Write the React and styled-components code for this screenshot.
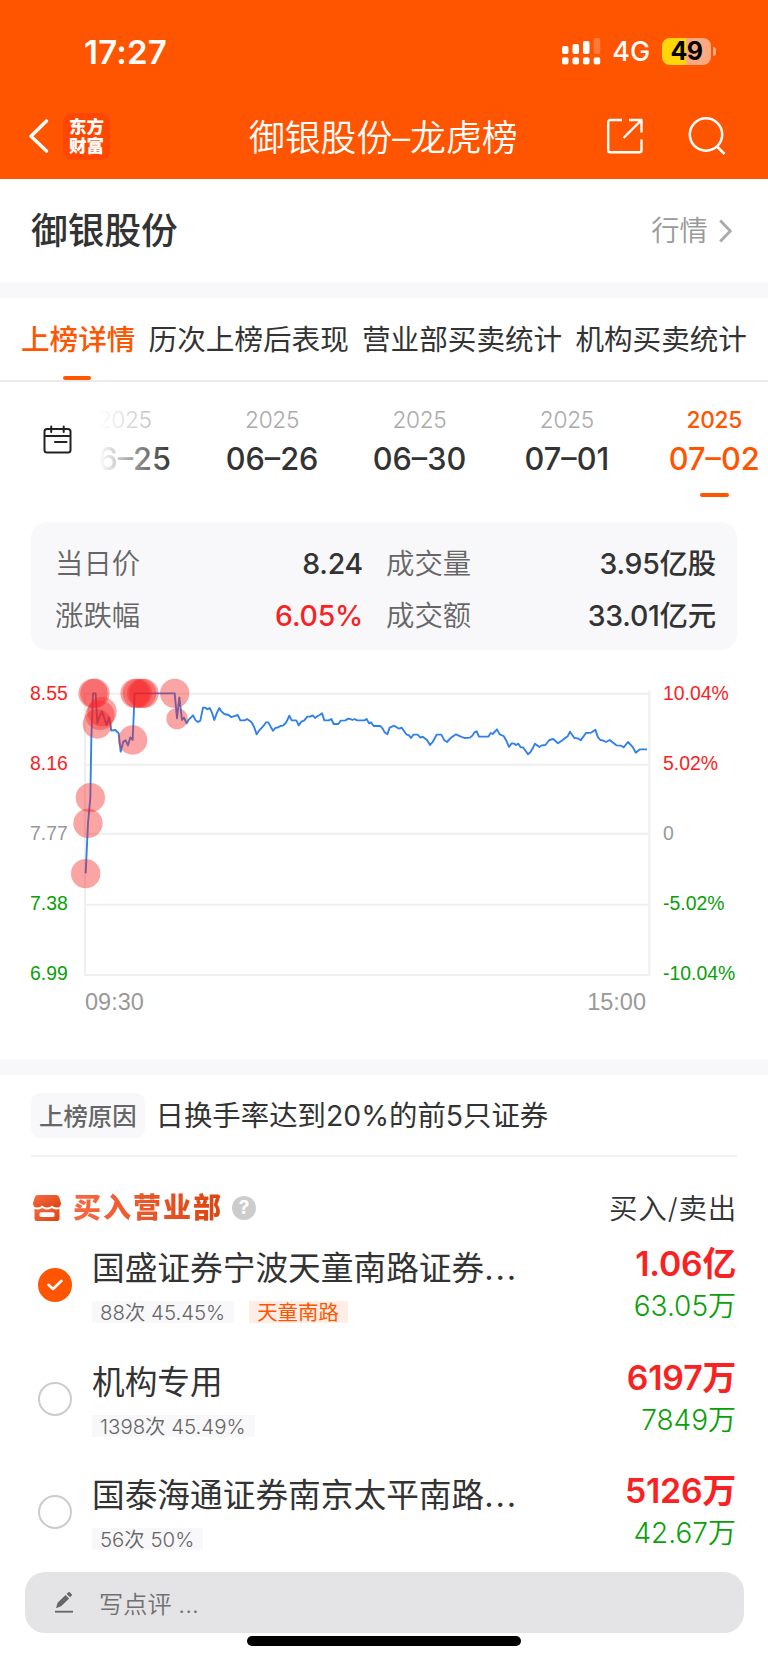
import React from 'react';
import styled, { createGlobalStyle, css } from 'styled-components';


const GlobalStyle = createGlobalStyle`
    * {
        box-sizing: border-box;
    }

    body {
        margin: 0;
        background: #fff;
        color: #333;
        font-family: Inter, "Noto Sans CJK SC", sans-serif;
        -webkit-font-smoothing: antialiased;
    }
`;

const Page = styled.div`
    width: 768px;
    height: 1663px;
    overflow: hidden;
    display: flex;
    flex-direction: column;
    background: #fff;
    white-space: nowrap;

    svg {
        display: block;
        flex: none;
    }
`;

const Header = styled.header`
    height: 179px;
    background: #ff5500;
    color: #fff;
`;

const StatusBar = styled.div`
    display: flex;
    align-items: center;
    height: 102px;
    padding: 0 52px 0 84px;
`;

const Clock = styled.span`
    flex: 1;
    padding-top: 1px;
    font-size: 33px;
    font-weight: 600;
    letter-spacing: 0.2px;
`;

const Network = styled.span`
    margin: 0 12px 0 11px;
    padding-top: 1px;
    font-size: 27px;
    font-weight: 450;
    letter-spacing: -0.1px;
`;

const Battery = styled.span`
    width: 49px;
    height: 27px;
    border-radius: 8px;
    background: linear-gradient(90deg, #ffd60a 49%, #ffa982 49%);
    color: #000;
    font-size: 25px;
    font-weight: 700;
    line-height: 27px;
    text-align: center;
    letter-spacing: -0.5px;
`;

const BatteryTip = styled.span`
    width: 3px;
    height: 9px;
    margin-left: 2px;
    border-radius: 0 4px 4px 0;
    background: #ffa982;
`;

const NavBar = styled.nav`
    display: flex;
    align-items: center;
    height: 68px;
    padding: 0 42px 0 28px;
`;

const AppLogo = styled.div`
    width: 47px;
    height: 47px;
    margin-left: 14px;
    padding-top: 4px;
    border-radius: 9px;
    background: #ff4700;
    font-size: 17.5px;
    font-weight: 900;
    line-height: 19.5px;
    text-align: center;
`;

const NavTitle = styled.h1`
    flex: 1;
    margin: 0;
    padding: 4px 0 0 139px;
    font-size: 35.8px;
    font-weight: 350;
    line-height: 48px;
`;

const NavActions = styled.div`
    display: flex;
    align-items: center;
    gap: 45px;
`;

const StockBar = styled.section`
    display: flex;
    align-items: center;
    justify-content: space-between;
    height: 103px;
    padding: 0 36px 0 31px;
`;

const StockName = styled.h2`
    margin: 0;
    font-size: 36.7px;
    font-weight: 500;
    line-height: 50px;
`;

const QuoteLink = styled.a`
    display: flex;
    align-items: center;
    gap: 11px;
    color: #999;
    font-size: 28.4px;
    font-weight: 350;
    line-height: 40px;
`;

const Divider = styled.div`
    flex: none;
    height: 16px;
    background: #f8f8fa;
`;

const Tabs = styled.div`
    display: flex;
    justify-content: space-between;
    height: 84px;
    padding: 20px 21px 0 21px;
    border-bottom: 2px solid #ebebeb;
`;

const Tab = styled.div`
    display: flex;
    flex-direction: column;
    align-items: center;
    justify-content: space-between;
    font-size: 28.6px;
    line-height: 44px;

    ${props => props.$active && css`
        color: #ff5500;
        font-weight: 500;

        &::after {
            content: "";
            width: 28px;
            height: 4px;
            margin-right: 2px;
            border-radius: 2px;
            background: #ff5500;
        }
    `}
`;

const DateBar = styled.div`
    display: flex;
    height: 140px;
`;

const CalendarButton = styled.div`
    width: 99px;
    padding: 43px 0 0 43px;
`;

const DateScroller = styled.div`
    position: relative;
    flex: 1;
    overflow: hidden;

    &::before {
        content: "";
        position: absolute;
        inset: 0 auto 0 0;
        width: 72px;
        background: linear-gradient(90deg, #fff, rgba(255, 255, 255, 0));
    }
`;

const DateList = styled.div`
    display: flex;
    margin-left: -48px;
`;

const DateItem = styled.div`
    flex: none;
    display: flex;
    flex-direction: column;
    align-items: center;
    width: 147.4px;
    padding-top: 24px;
    color: ${props => props.$active ? '#ff5500' : '#333'};

    &::after {
        content: "";
        width: 29px;
        height: 4px;
        margin-top: 13px;
        border-radius: 2px;
        background: ${props => props.$active ? '#ff5500' : 'transparent'};
    }
`;

const Year = styled.span`
    color: ${props => props.$active ? '#ff5500' : '#aaa'};
    font-size: 22.7px;
    font-weight: ${props => props.$active ? 450 : 350};
    line-height: 28px;
    letter-spacing: -0.3px;
`;

const Day = styled.span`
    margin-top: 4px;
    font-size: 30.7px;
    font-weight: 450;
    line-height: 42px;
    letter-spacing: 0;
`;

const Summary = styled.dl`
    display: grid;
    grid-template-columns: 308px 1fr;
    column-gap: 23px;
    align-content: start;
    height: 128px;
    margin: 0 31px;
    padding: 16px 21px 0 24px;
    border-radius: 16px;
    background: #f8f8fa;
`;

const SummaryItem = styled.div`
    display: flex;
    justify-content: space-between;
    height: 52px;
    font-size: 28.4px;
    line-height: 52px;
`;

const Label = styled.dt`
    color: #666;
    font-weight: 350;
`;

const Value = styled.dd`
    margin: 0;
    color: ${props => props.$up ? '#f92222' : '#333'};
    font-weight: 500;
    letter-spacing: -0.2px;
`;

const Chart = styled.section`
    display: flex;
    height: 409px;
    padding: 33px 0 0 30px;
    font-family: "Liberation Sans", Arial, sans-serif;
`;

const Axis = styled.div`
    display: flex;
    flex-direction: column;
    justify-content: space-between;
    width: ${props => props.$width}px;
    height: 300px;
    font-size: 19.4px;
    line-height: 20px;
`;

const tones = { up: '#f92222', flat: '#999', down: '#09a009' };

const Tick = styled.span`
    color: ${props => tones[props.$tone]};
`;

const Plot = styled.div`
    width: 566px;
    margin-right: 13px;
`;

const ChartBox = styled.div`
    height: 320px;
    margin-top: -23px;
`;

const TimeAxis = styled.div`
    display: flex;
    justify-content: space-between;
    margin-top: 8px;
    padding: 0 4px 0 1px;
    color: #999;
    font-size: 23.5px;
    line-height: 28px;
`;

const Reason = styled.section`
    display: flex;
    align-items: center;
    height: 82px;
    margin: 0 31px;
    border-bottom: 2px solid #f2f2f3;
`;

const ReasonText = styled.span`
    padding-bottom: 4px;
    font-size: 28.4px;
`;

const ReasonTag = styled.span`
    height: 45px;
    margin-right: 11px;
    padding: 0 8px;
    border-radius: 9px;
    background: #f8f8fa;
    color: #666;
    font-size: 24.4px;
    font-weight: 500;
    line-height: 46px;
`;

const BuyHeader = styled.div`
    display: flex;
    align-items: center;
    height: 71px;
    padding: 31px 31px 0 33px;
`;

const BuyTitle = styled.h3`
    flex: none;
    margin: 0 9px 0 12px;
    background: linear-gradient(90deg, #f66a42, #dc4410);
    background-clip: text;
    -webkit-text-fill-color: transparent;
    font-size: 28px;
    font-weight: 900;
    line-height: 36px;
    letter-spacing: 2px;
`;

const Help = styled.span`
    width: 24px;
    height: 24px;
    margin-right: auto;
    border-radius: 50%;
    background: #ccc;
    color: #fff;
    font-size: 19px;
    font-weight: 700;
    line-height: 24px;
    text-align: center;
`;

const ColumnTitle = styled.span`
    padding-bottom: 3px;
    font-size: 28.5px;
    font-weight: 350;
    letter-spacing: 0.8px;
`;

const Row = styled.div`
    display: flex;
    height: 113.6px;
    padding: 0 32px 0 38px;
`;

const Radio = styled.span`
    display: flex;
    align-items: center;
    justify-content: center;
    flex: none;
    width: 34px;
    height: 34px;
    margin: 40px 20px 0 0;
    border: 2px solid ${props => props.$checked ? '#ff5500' : '#ccc'};
    border-radius: 50%;
    background: ${props => props.$checked ? '#ff5500' : '#fff'};
`;

const Branch = styled.div`
    flex: 1;
`;

const BranchName = styled.div`
    height: 73px;
    padding-top: 17px;
    font-size: 32.7px;
    line-height: 46px;
`;

const Dots = styled.span`
    letter-spacing: 1.8px;
`;

const Tags = styled.div`
    display: flex;
    gap: 15px;
`;

const Tag = styled.span`
    height: 22px;
    padding: 0 9px 0 8px;
    background: ${props => props.$hot ? '#ffeee6' : '#f8f8fa'};
    color: ${props => props.$hot ? '#ff5500' : '#666'};
    font-size: 20.4px;
    font-weight: ${props => props.$hot ? 400 : 350};
    line-height: 23px;
`;

const Amounts = styled.div`
    display: flex;
    flex-direction: column;
    align-items: flex-end;
    padding-top: 13px;
`;

const Buy = styled.span`
    color: #f92222;
    font-size: 33.8px;
    font-weight: 600;
    line-height: 46px;
    letter-spacing: -0.2px;
`;

const Sell = styled.span`
    color: #09a009;
    font-size: 28px;
    font-weight: 350;
    line-height: 38px;
`;

const CommentBar = styled.div`
    display: flex;
    align-items: center;
    gap: 25px;
    flex: none;
    height: 61px;
    margin: 3px 24px 0 25px;
    padding-left: 29px;
    border-radius: 20px;
    background: #e4e4e6;
    color: #707070;
    font-size: 24.2px;
    font-weight: 350;
`;

const HomeIndicator = styled.div`
    width: 274px;
    height: 10px;
    margin: 3px auto 0;
    border-radius: 5px;
    background: #000;
`;


const tabs = ['上榜详情', '历次上榜后表现', '营业部买卖统计', '机构买卖统计'];

const dates = ['06–25', '06–26', '06–30', '07–01', '07–02'];

const prices = [
    ['8.55', 'up'], ['8.16', 'up'], ['7.77', 'flat'], ['7.38', 'down'], ['6.99', 'down'],
];

const percents = [
    ['10.04%', 'up'], ['5.02%', 'up'], ['0', 'flat'], ['-5.02%', 'down'], ['-10.04%', 'down'],
];

const pricePath = `256,640 263,490 270,413 273,235 278,100 286,100 291,190 298,168 305,155 312,175
    319,196 326,172 333,212 345,210 355,220 361,275 369,245 376,241 383,256 390,232 397,240 403,100
    523,100 530,175 537,112 545,180 551,173 559,190 566,178 578,166 586,181 593,186 600,182 608,143
    615,143 621,148 628,144 635,158 642,180 650,158 657,144 663,154 672,162 685,165 692,171 700,169
    712,165 720,181 733,181 740,177 753,186 761,200 769,223 777,211 790,197 797,187 804,187 811,200
    818,212 825,204 833,202 840,198 848,197 856,189 861,180 867,167 874,181 888,181 895,196 903,185
    912,181 921,170 929,170 937,166 944,174 952,168 958,165 965,160 972,181 985,181 993,177 1000,192
    1014,192 1021,182 1035,181 1044,176 1050,177 1056,180 1063,177 1070,181 1092,181 1099,177
    1106,190 1112,187 1120,198 1140,198 1147,206 1153,217 1161,223 1168,203 1182,197 1196,206
    1204,203 1218,223 1226,226 1232,234 1239,224 1252,224 1260,233 1267,230 1280,240 1289,255
    1297,246 1309,224 1323,224 1332,241 1340,246 1352,233 1367,223 1380,229 1392,234 1409,233
    1417,226 1422,217 1429,214 1436,230 1464,230 1471,219 1477,222 1490,208 1498,223 1510,228
    1518,242 1526,261 1534,250 1542,251 1547,255 1554,251 1561,262 1568,262 1576,273 1583,283
    1590,277 1598,263 1604,251 1617,261 1625,256 1635,255 1647,240 1659,237 1673,250 1686,241
    1702,229 1709,215 1722,234 1732,235 1741,241 1757,219 1772,218 1785,209 1793,232 1800,240
    1807,241 1817,246 1828,240 1848,256 1862,257 1870,262 1883,246 1898,262 1906,278 1919,268
    1940,268`;

const marks = [
    [256, 641], [263, 490], [270, 413], [278, 100], [284, 100], [291, 192], [299, 166], [305, 155],
    [397, 240], [404, 100], [411, 100], [424, 100], [431, 100], [523, 100], [530, 176, 32],
];

const branches = [
    { name: '国盛证券宁波天童南路证券', cut: true, stat: '88次 45.45%', hot: '天童南路', buy: '1.06亿', sell: '63.05万', checked: true },
    { name: '机构专用', stat: '1398次 45.49%', buy: '6197万', sell: '7849万' },
    { name: '国泰海通证券南京太平南路', cut: true, stat: '56次 50%', buy: '5126万', sell: '42.67万' },
];


const SignalIcon = () => (
    <svg width="39" height="27" fill="#fff">
        <rect x="0" y="8" width="6.5" height="8" rx="2" />
        <rect x="10.5" y="6" width="6.5" height="10" rx="2" />
        <rect x="21" y="3" width="6.5" height="13" rx="2" />
        <rect x="31.7" y="0" width="6.5" height="16" rx="2" opacity="0.22" />
        {[0, 10.5, 21, 31.7].map(x => (
            <rect key={x} x={x} y="19.2" width="6.5" height="7.3" rx="2" />
        ))}
    </svg>
);

const BackIcon = () => (
    <svg width="21" height="36" fill="none" stroke="#fff" strokeWidth="3.4" strokeLinecap="round" strokeLinejoin="round">
        <path d="M18.5 3 L3 18.2 L18.5 33" />
    </svg>
);

const ShareIcon = () => (
    <svg width="36" height="36" fill="none" stroke="#fff" strokeWidth="2.4" strokeLinejoin="round">
        <path d="M15 2H3.2Q1.2 2 1.2 4V32.2Q1.2 34.2 3.2 34.2H32.5Q34.5 34.2 34.5 32.2V21.5" />
        <path d="M22 2H34.5V14.5M34 2.5L16.5 20" />
    </svg>
);

const SearchIcon = () => (
    <svg width="38" height="38" fill="none" stroke="#fff" strokeWidth="2.5">
        <circle cx="18" cy="17.5" r="16.2" />
        <path d="M29 29.5 L36.5 37" />
    </svg>
);

const ArrowIcon = () => (
    <svg width="13" height="24" fill="none" stroke="#aaa" strokeWidth="2.8">
        <path d="M1.2 1.5 L11.3 12 L1.2 22.5" />
    </svg>
);

const CalendarIcon = () => (
    <svg width="29" height="29" fill="none" stroke="#222" strokeWidth="2" strokeLinecap="round">
        <rect x="1.5" y="4" width="26" height="23.5" rx="2.5" />
        <path d="M2 11H27M8.2 1.5V7M20.7 1.5V7M12 17H23.5" />
    </svg>
);

const ShopIcon = () => (
    <svg width="28" height="26" viewBox="0 0 28 26">
        <defs>
            <linearGradient id="shop" x1="0" y1="0" x2="1" y2="1">
                <stop offset="0" stopColor="#f66a42" />
                <stop offset="1" stopColor="#dc4410" />
            </linearGradient>
        </defs>
        <path
            fill="url(#shop)"
            d="M5 0H23Q25.5 0 26.2 2.2L28 8Q28 12.5 23.8 12.5Q20.5 12.5 19 10.4Q17 12.5 14 12.5Q11 12.5 9 10.4Q7.5 12.5 4.2 12.5Q0 12.5 0 8L1.8 2.2Q2.5 0 5 0Z"
        />
        <path
            fill="url(#shop)"
            fillRule="evenodd"
            d="M1.5 14Q6.5 15.3 9.2 13Q14 16 18.8 13Q21.5 15.3 26.5 14V23.5Q26.5 26 24 26H4Q1.5 26 1.5 23.5ZM8 17.2Q6.5 17.2 6.5 18.7V20.5Q6.5 22 8 22H20Q21.5 22 21.5 20.5V18.7Q21.5 17.2 20 17.2Z"
        />
    </svg>
);

const CheckIcon = () => (
    <svg width="18" height="14" fill="none" stroke="#fff" strokeWidth="2.6" strokeLinecap="round" strokeLinejoin="round">
        <path d="M2.5 6.8 L7 11 L15.5 2.8" />
    </svg>
);

const PencilIcon = () => (
    <svg width="20" height="24" fill="#666">
        <path d="M2 18.2 L3.6 12.8 L11.6 4.9 L15.1 8.4 L7.1 16.3 Z" />
        <path d="M12.6 3.9 L14.3 2.2 Q15 1.5 15.7 2.2 L17.7 4.2 Q18.4 4.9 17.7 5.6 L16.1 7.3 Z" />
        <rect x="1" y="20.8" width="18" height="1.8" />
    </svg>
);

const PriceChart = () => (
    <svg width="566" height="320" viewBox="251 0 1698 960" overflow="visible">
        <g stroke="#efefef" strokeWidth="6">
            {[101, 314, 521, 734, 945].map(y => (
                <path key={y} d={`M254 ${y}H1947`} />
            ))}
            <path d="M254 98V948M1947 92V948" />
        </g>
        <polyline points={pricePath} fill="none" stroke="#2f80e8" strokeWidth="5.6" strokeLinejoin="round" />
        <g fill="#f52323" fillOpacity="0.41">
            {marks.map(([x, y, r = 44]) => (
                <circle key={`${x}-${y}`} cx={x} cy={y} r={r} />
            ))}
        </g>
    </svg>
);


const App = () => {
    return (
        <Page>
            <GlobalStyle />
            <Header>
                <StatusBar>
                    <Clock>17:27</Clock>
                    <SignalIcon />
                    <Network>4G</Network>
                    <Battery>49</Battery>
                    <BatteryTip />
                </StatusBar>
                <NavBar>
                    <BackIcon />
                    <AppLogo>东方<br />财富</AppLogo>
                    <NavTitle>御银股份–龙虎榜</NavTitle>
                    <NavActions>
                        <ShareIcon />
                        <SearchIcon />
                    </NavActions>
                </NavBar>
            </Header>

            <StockBar>
                <StockName>御银股份</StockName>
                <QuoteLink>行情<ArrowIcon /></QuoteLink>
            </StockBar>
            <Divider />

            <Tabs>
                {tabs.map((tab, i) => (
                    <Tab key={tab} $active={i === 0}>{tab}</Tab>
                ))}
            </Tabs>
            <DateBar>
                <CalendarButton><CalendarIcon /></CalendarButton>
                <DateScroller>
                    <DateList>
                        {dates.map(day => (
                            <DateItem key={day} $active={day === '07–02'}>
                                <Year $active={day === '07–02'}>2025</Year>
                                <Day>{day}</Day>
                            </DateItem>
                        ))}
                    </DateList>
                </DateScroller>
            </DateBar>

            <Summary>
                <SummaryItem><Label>当日价</Label><Value>8.24</Value></SummaryItem>
                <SummaryItem><Label>成交量</Label><Value>3.95亿股</Value></SummaryItem>
                <SummaryItem><Label>涨跌幅</Label><Value $up>6.05%</Value></SummaryItem>
                <SummaryItem><Label>成交额</Label><Value>33.01亿元</Value></SummaryItem>
            </Summary>

            <Chart>
                <Axis $width={54}>
                    {prices.map(([text, tone]) => <Tick key={text} $tone={tone}>{text}</Tick>)}
                </Axis>
                <Plot>
                    <ChartBox><PriceChart /></ChartBox>
                    <TimeAxis><span>09:30</span><span>15:00</span></TimeAxis>
                </Plot>
                <Axis $width={90}>
                    {percents.map(([text, tone]) => <Tick key={text} $tone={tone}>{text}</Tick>)}
                </Axis>
            </Chart>
            <Divider />

            <Reason>
                <ReasonTag>上榜原因</ReasonTag>
                <ReasonText>日换手率达到20%的前5只证券</ReasonText>
            </Reason>

            <BuyHeader>
                <ShopIcon />
                <BuyTitle>买入营业部</BuyTitle>
                <Help>?</Help>
                <ColumnTitle>买入/卖出</ColumnTitle>
            </BuyHeader>
            {branches.map(item => (
                <Row key={item.name}>
                    <Radio $checked={item.checked}>{item.checked && <CheckIcon />}</Radio>
                    <Branch>
                        <BranchName>{item.name}{item.cut && <Dots>...</Dots>}</BranchName>
                        <Tags>
                            <Tag>{item.stat}</Tag>
                            {item.hot && <Tag $hot>{item.hot}</Tag>}
                        </Tags>
                    </Branch>
                    <Amounts>
                        <Buy>{item.buy}</Buy>
                        <Sell>{item.sell}</Sell>
                    </Amounts>
                </Row>
            ))}

            <CommentBar><PencilIcon />写点评 ...</CommentBar>
            <HomeIndicator />
        </Page>
    );
};

export default App;
